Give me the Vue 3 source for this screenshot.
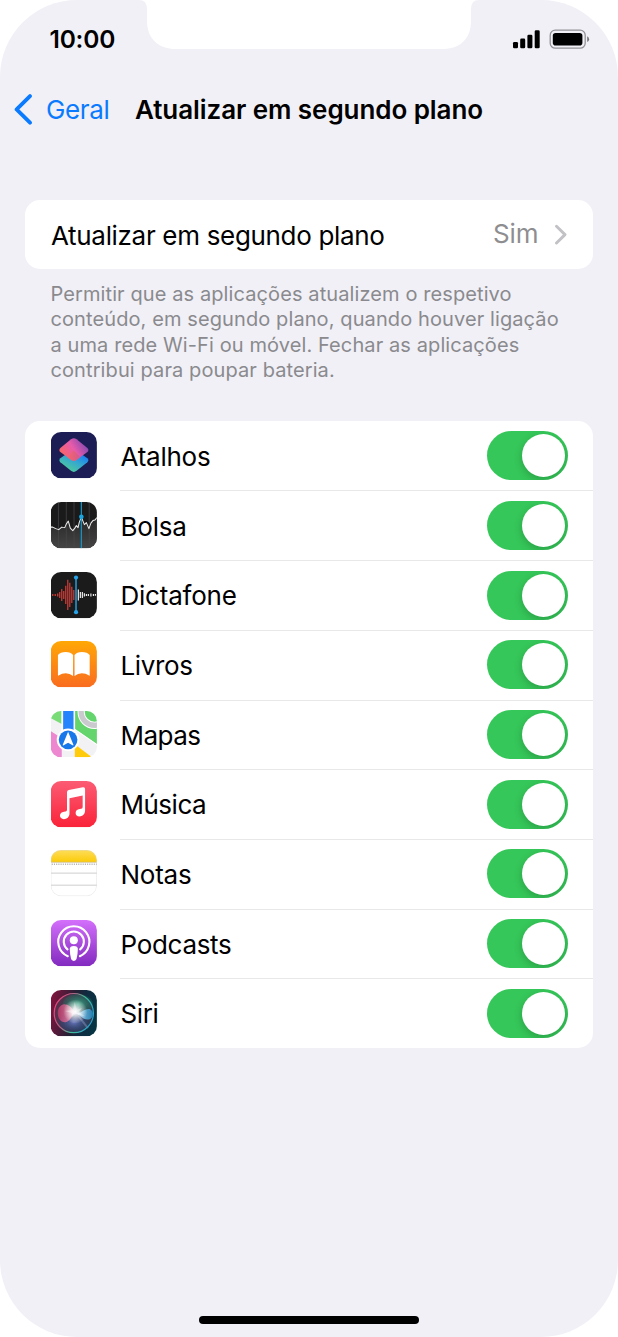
<script setup>
const apps = [
  { id: 'atalhos', name: 'Atalhos', ls: '-0.25px' },
  { id: 'bolsa', name: 'Bolsa', ls: '-0.2px' },
  { id: 'dictafone', name: 'Dictafone', ls: '-0.22px' },
  { id: 'livros', name: 'Livros', ls: '-0.35px' },
  { id: 'mapas', name: 'Mapas', ls: '-0.5px' },
  { id: 'musica', name: 'Música', ls: '-0.5px' },
  { id: 'notas', name: 'Notas', ls: '-0.25px' },
  { id: 'podcasts', name: 'Podcasts', ls: '-0.3px' },
  { id: 'siri', name: 'Siri', ls: '-0.35px' },
]
const redBars = [[2, 1], [4.5, 1], [7, 1.5], [9, 3], [11, 6], [13, 4], [15, 9], [17, 15], [19, 12], [21, 8], [23, 5]]
const whiteBars = [[27.5, 5.5], [29.5, 3], [31.5, 3], [33.5, 1.6], [35.5, 1], [37.5, 1], [40, 1.5], [42.5, 1], [44.5, 0.8]]
</script>

<template>
  <div class="phone">
    <svg class="notch" width="340" height="50" viewBox="0 0 340 50">
      <path d="M0 0 Q8 0 8 9 V21 C8 39 20 49 37 49 H303 C321 49 332 39 332 21 V9 Q332 0 340 0Z" fill="#fff" />
    </svg>

    <header class="status">
      <span class="time">10:00</span>
      <svg class="indicators" width="78" height="22" viewBox="0 0 78 22">
        <rect x="1" y="13" width="5" height="6.3" rx="1.3" />
        <rect x="8.2" y="9.6" width="5" height="9.7" rx="1.3" />
        <rect x="15.4" y="5.7" width="5" height="13.6" rx="1.3" />
        <rect x="22.7" y="1.3" width="5" height="18" rx="1.3" />
        <rect x="38.2" y="1.2" width="35" height="18" rx="5" fill="none" stroke="#929296" stroke-width="1.3" />
        <rect x="40.8" y="3.9" width="29.6" height="12.7" rx="2.8" />
        <path d="M75.2 7.3 Q77.1 8.2 77.1 10.2 T75.2 13.1Z" fill="#77777b" />
      </svg>
    </header>

    <nav class="nav">
      <svg class="back" width="20" height="32" viewBox="0 0 20 32">
        <path d="M17 3.1 L3.6 16.4 L17 29.7" fill="none" stroke="#0a7aff" stroke-width="3.8" stroke-linecap="round" stroke-linejoin="round" />
      </svg>
      <span class="geral">Geral</span>
      <h1 class="title">Atualizar em segundo plano</h1>
    </nav>

    <section class="card summary">
      <span class="summary-label">Atualizar em segundo plano</span>
      <span class="value">Sim</span>
      <svg width="14" height="22" viewBox="0 0 14 22">
        <path d="M2.5 3.3 L11 11.6 L2.5 20" fill="none" stroke="#c2c2c6" stroke-width="2.9" stroke-linecap="round" stroke-linejoin="round" />
      </svg>
    </section>

    <p class="note">
      <span>Permitir que as aplicações atualizem o respetivo</span>
      <span>conteúdo, em segundo plano, quando houver ligação</span>
      <span>a uma rede Wi-Fi ou móvel. Fechar as aplicações</span>
      <span>contribui para poupar bateria.</span>
    </p>

    <section class="card list">
      <div v-for="app in apps" :key="app.id" class="row">
        <svg class="icon" width="47" height="47" viewBox="0 0 47 47">
          <defs>
            <clipPath :id="'clip-' + app.id"><rect width="46" height="46" rx="10.3" /></clipPath>
          </defs>
          <g transform="translate(-0.3 0) scale(1.005)">
          <g :clip-path="`url(#clip-${app.id})`">
            <template v-if="app.id === 'atalhos'">
              <defs>
                <linearGradient id="at-top" x1="0.1" y1="0.7" x2="0.9" y2="0.3"><stop offset="0" stop-color="#f8646a" /><stop offset="0.5" stop-color="#e85baa" /><stop offset="1" stop-color="#8d4bb0" /></linearGradient>
                <linearGradient id="at-bot" x1="0.3" y1="0.9" x2="0.8" y2="0.2"><stop offset="0" stop-color="#4cc7a0" /><stop offset="0.5" stop-color="#35a8cf" /><stop offset="1" stop-color="#187df5" /></linearGradient>
                <linearGradient id="at-mid" x1="0" y1="0" x2="1" y2="0"><stop offset="0" stop-color="#f8646a" /><stop offset="1" stop-color="#cf5a90" /></linearGradient>
              </defs>
              <rect width="46" height="46" fill="#1b1d54" />
              <path d="M9.6 26 L20.5 18.3 Q23 16.7 25.5 18.3 L36.5 26 Q38.5 28 36.5 30 L25.8 38.6 Q23 40.8 20.2 38.6 L9.6 30 Q7.7 28 9.6 26Z" fill="url(#at-bot)" />
              <path d="M9.6 15.8 L20.2 7.2 Q23 5 25.8 7.2 L36.5 15.8 Q38.5 17.9 36.5 20 L25.5 27.8 Q23 29.3 20.5 27.8 L9.6 20 Q7.7 17.9 9.6 15.8Z" fill="url(#at-top)" />
              <path d="M16.5 25 L23 18.2 L29.5 25 L25.5 27.8 Q23 29.3 20.5 27.8Z" fill="url(#at-mid)" />
            </template>

            <template v-else-if="app.id === 'bolsa'">
              <defs><linearGradient id="bo-fill" x1="0" y1="0" x2="0" y2="1"><stop offset="0" stop-color="#444" stop-opacity="0.3" /><stop offset="1" stop-color="#444" /></linearGradient></defs>
              <rect width="46" height="46" fill="#1a1a1b" />
              <path d="M0 25 L3 25 L7 27.5 L11 25 L14 25.5 L17.5 19 L21 27.5 L23 28 L27 22 L30.5 15 L33 22 L35 20.5 L38 26 L41 19.5 L46 15.5 V46 H0Z" fill="url(#bo-fill)" />
              <path d="M7.7 0V46M15.5 0V46M23.2 0V46M38.3 0V46" stroke="#49494b" stroke-width="0.7" />
              <path d="M0 25 H2 L5 26.5 L8 27.5 L11 25 L14 25.5 L15.5 22 L17.5 19 L19.5 26 L22 28.5 L24 26 L25.5 23.5 L27.2 25.5 L28.5 20 L30.5 15 L32.5 20 L33.5 22.5 L35.5 20.5 L38 26.5 L40 21 L42 18.5 L44 18 L46 15.5" fill="none" stroke="#eee" stroke-width="1" stroke-linejoin="round" />
              <path d="M30.5 0V46" stroke="#1694cb" stroke-width="1.2" />
              <circle cx="30.5" cy="14.8" r="2.3" fill="#19a5df" />
            </template>

            <template v-else-if="app.id === 'dictafone'">
              <rect width="46" height="46" fill="#1b1b1c" />
              <path v-for="b in redBars" :key="b[0]" :d="`M${b[0]} ${22.8 - b[1]}V${22.8 + b[1]}`" stroke="#d9403a" stroke-width="1.15" />
              <path v-for="b in whiteBars" :key="b[0]" :d="`M${b[0]} ${22.8 - b[1]}V${22.8 + b[1]}`" stroke="#f1f1f1" stroke-width="1.15" />
              <path d="M25.2 5.5V40" stroke="#2495cf" stroke-width="1.6" />
              <circle cx="25.2" cy="5.5" r="2.1" fill="#27a4e8" /><circle cx="25.2" cy="40" r="2.1" fill="#27a4e8" />
            </template>

            <template v-else-if="app.id === 'livros'">
              <defs><linearGradient id="li-bg" x1="0" y1="0" x2="0" y2="1"><stop offset="0" stop-color="#ffa806" /><stop offset="1" stop-color="#f96c1f" /></linearGradient></defs>
              <rect width="46" height="46" fill="url(#li-bg)" />
              <path d="M7.2 14 Q9.5 10.9 15 10.9 Q20 10.9 22.3 14 V34.8 Q19 32 15 32 Q11 32 8.3 34.2 Q7.2 35 7.2 34Z M38.8 14 Q36.5 10.9 31 10.9 Q26 10.9 23.7 14 V34.8 Q27 32 31 32 Q35 32 37.7 34.2 Q38.8 35 38.8 34Z" fill="#fff" />
            </template>

            <template v-else-if="app.id === 'mapas'">
              <rect width="46" height="46" fill="#f2f2f4" />
              <path d="M0 0H11V13L0 7Z" fill="#79dc77" />
              <path d="M0 20 L11 27 V46 H0Z" fill="#ed87cf" />
              <path d="M24 0H46V33L24 18Z" fill="#63d56c" />
              <path d="M24 33 L41 46 H24Z" fill="#ffcb0a" />
              <circle cx="43.5" cy="1" r="13.2" fill="none" stroke="#fff" stroke-width="7.2" /><circle cx="43.5" cy="1" r="13.2" fill="none" stroke="#cacace" stroke-width="5.3" />
              <path d="M11.5 0V24M23.5 0V24" stroke="#fff" stroke-width="1.6" />
              <rect x="12.4" width="10.3" height="24" fill="#2583fb" />
              <path d="M24 18.2 L46 33.5" stroke="#fff" stroke-width="1" />
              <circle cx="17.3" cy="28.7" r="11.3" fill="#fff" />
              <circle cx="17.3" cy="28.7" r="9.3" fill="#1978e9" />
              <path d="M17.3 20.7 L22.6 33.5 Q22.8 34.5 21.7 34.1 L17.3 31.5 L12.9 34.1 Q11.8 34.5 12 33.5Z" fill="#fff" />
            </template>

            <template v-else-if="app.id === 'musica'">
              <defs><linearGradient id="mu-bg" x1="0" y1="0" x2="0" y2="1"><stop offset="0" stop-color="#fb5c74" /><stop offset="1" stop-color="#fa2339" /></linearGradient></defs>
              <rect width="46" height="46" fill="url(#mu-bg)" />
              <path d="M16.2 11.2 Q16.2 9.4 18 9 L32 6.3 Q34.2 5.9 34.2 8 V29.2 C34.2 33.3 31.6 35.2 28.6 35.2 C26.3 35.2 24.8 33.8 24.8 31.8 C24.8 29.5 26.2 28.3 28.8 27.8 L30.4 27.5 Q31.8 27.2 31.8 25.8 V14.4 L18.7 17.1 V32.2 C18.7 36.2 16 38 13.1 38 C10.8 38 9.2 36.6 9.2 34.7 C9.2 32.4 10.7 31.2 13.2 30.7 L14.8 30.4 Q16.2 30.1 16.2 28.5Z" fill="#fff" />
            </template>

            <template v-else-if="app.id === 'notas'">
              <defs><linearGradient id="no-bg" x1="0" y1="0" x2="0" y2="1"><stop offset="0" stop-color="#fddd5b" /><stop offset="1" stop-color="#fccb09" /></linearGradient></defs>
              <rect width="46" height="46" fill="#fff" />
              <rect width="46" height="12" fill="url(#no-bg)" />
              <path d="M0 12.2H46" stroke="#c9b985" stroke-width="0.8" />
              <path d="M1 14.2H46" stroke="#b4b4b4" stroke-width="1.3" stroke-dasharray="1.1 1.1" />
              <path d="M0 23H46M0 35H46" stroke="#c9c9cb" stroke-width="0.9" />
              <rect x="0.3" y="0.3" width="45.4" height="45.4" rx="10" fill="none" stroke="#d8d8d8" stroke-opacity="0.65" stroke-width="0.7" />
            </template>

            <template v-else-if="app.id === 'podcasts'">
              <defs><linearGradient id="po-bg" x1="0" y1="0" x2="0" y2="1"><stop offset="0" stop-color="#d36ffb" /><stop offset="1" stop-color="#822abf" /></linearGradient></defs>
              <rect width="46" height="46" fill="url(#po-bg)" />
              <g fill="none" stroke="#fff" stroke-width="2.1" stroke-linecap="round">
                <path d="M17 36 A15.5 15.5 0 1 1 29 36" />
                <path d="M16.7 29.2 A10 10 0 1 1 29.3 29.2" />
              </g>
              <circle cx="23" cy="20.2" r="4" fill="#fff" />
              <path d="M19 28.7 Q19 25.8 23 25.8 T27 28.7 Q27 34 25.7 38.9 Q25.2 40.7 23 40.7 T20.3 38.9 Q19 34 19 28.7Z" fill="#fff" />
            </template>

            <template v-else>
              <defs>
                <linearGradient id="si-bg" x1="0" y1="0.4" x2="1" y2="0.6"><stop offset="0" stop-color="#7c143d" /><stop offset="0.48" stop-color="#242135" /><stop offset="0.7" stop-color="#102c40" /><stop offset="1" stop-color="#063443" /></linearGradient>
                <linearGradient id="si-ring" x1="0" y1="0.3" x2="1" y2="0.7"><stop offset="0" stop-color="#e84278" /><stop offset="0.35" stop-color="#ab6887" /><stop offset="0.6" stop-color="#43bd98" /><stop offset="1" stop-color="#299bd0" /></linearGradient>
                <linearGradient id="si-pink" x1="0" y1="0" x2="1" y2="0"><stop offset="0" stop-color="#c93a6e" stop-opacity="0.75" /><stop offset="1" stop-color="#f6a7bf" stop-opacity="0.9" /></linearGradient>
                <linearGradient id="si-cyan" x1="0" y1="0" x2="1" y2="0"><stop offset="0" stop-color="#b5dcf2" /><stop offset="1" stop-color="#268fc9" stop-opacity="0.8" /></linearGradient>
                <radialGradient id="si-green"><stop offset="0" stop-color="#42cc9a" stop-opacity="0.75" /><stop offset="1" stop-color="#158163" stop-opacity="0.25" /></radialGradient>
                <radialGradient id="si-blue"><stop offset="0" stop-color="#7382cf" stop-opacity="0.85" /><stop offset="1" stop-color="#174687" stop-opacity="0.2" /></radialGradient>
                <radialGradient id="si-light"><stop offset="0" stop-color="#fff" /><stop offset="0.3" stop-color="#fff" stop-opacity="0.8" /><stop offset="1" stop-color="#fff" stop-opacity="0" /></radialGradient>
              </defs>
              <rect width="46" height="46" fill="url(#si-bg)" />
              <circle cx="23" cy="23" r="19" fill="#4b4358" fill-opacity="0.6" />
              <ellipse cx="27" cy="14" rx="15" ry="10" fill="url(#si-green)" />
              <ellipse cx="23" cy="32" rx="15" ry="10" fill="url(#si-blue)" />
              <path d="M25 23 C19 14 12 11 8 18 C5 25 9 33 15 32 C20 31 21 24 25 23Z" fill="url(#si-pink)" />
              <path d="M24 23 C31 24 33 18 39 19 C43 21 43 27 39 29 C33 31 30 25 24 23Z" fill="url(#si-cyan)" />
              <path d="M27 25 L37 38" stroke="#bac6e8" stroke-opacity="0.3" stroke-width="2" />
              <circle cx="23" cy="23" r="19.5" fill="none" stroke="url(#si-ring)" stroke-width="1.2" />
              <circle cx="24.5" cy="21.5" r="12" fill="url(#si-light)" />
              <path d="M14 21 L22 20 L24 12 L26 20 L31 18 L28 22 L34 26 L25 24 L21 27 L21 23Z" fill="#fff" fill-opacity="0.35" />
            </template>
          </g>
          </g>
        </svg>
        <div class="content">
          <span class="name" :style="{ letterSpacing: app.ls }">{{ app.name }}</span>
          <span class="toggle"><span class="knob"></span></span>
        </div>
      </div>
    </section>

    <div class="home"></div>
  </div>
</template>

<style>
html, body { margin: 0; background: #fff; }
</style>

<style scoped>
.phone {
  position: relative;
  box-sizing: border-box;
  width: 618px;
  height: 1337px;
  padding: 0 25.5px;
  display: flex;
  flex-direction: column;
  background: #f1f0f6;
  border-radius: 77px;
  overflow: hidden;
  font-family: Inter, "Liberation Sans", sans-serif;
  color: #000;
}
.notch { position: absolute; left: 139px; top: 0; }
.status {
  display: flex;
  justify-content: space-between;
  align-items: flex-start;
  height: 79px;
  flex: none;
}
.time { margin: 24px 0 0 24px; font-size: 24.5px; line-height: 30px; font-weight: 600; letter-spacing: -0.2px; }
.indicators { margin: 29px 2.5px 0 0; }
.nav {
  display: flex;
  align-items: center;
  height: 60px;
  margin-left: -12.5px;
  white-space: nowrap;
  flex: none;
}
.back { flex: none; }
.geral { width: 89px; margin-left: 13px; font-size: 26px; color: #0a7aff; letter-spacing: -0.35px; }
.title { margin: 0; font-size: 26px; font-weight: 600; letter-spacing: -0.07px; }
.card { background: #fff; border-radius: 15px; flex: none; }
.summary {
  box-sizing: border-box;
  height: 69.5px;
  margin: 60.7px 0 0 -0.3px;
  padding: 0 25px 0 25.8px;
  display: flex;
  align-items: center;
  white-space: nowrap;
}
.summary-label { flex: 1; padding-top: 2px; font-size: 26px; letter-spacing: -0.32px; }
.value { margin: -2px 15px 0 0; font-size: 26px; color: #8e8e91; letter-spacing: -0.1px; }
.note {
  margin: 12.8px 0 0 25px;
  height: 138.8px;
  font-size: 20px;
  line-height: 25.4px;
  letter-spacing: 0.1px;
  color: #8a8a8e;
  white-space: nowrap;
  flex: none;
}
.note span { display: block; }
.list { overflow: hidden; margin-left: -0.3px; }
.row { display: flex; height: 69.7px; padding-left: 25.3px; }
.icon { flex: none; margin-top: 11.4px; }
.content {
  flex: 1;
  display: flex;
  align-items: center;
  justify-content: space-between;
  margin-left: 22px;
  padding-right: 25px;
  box-shadow: 0 0.7px 0 #dedee0;
}
.row:last-child .content { box-shadow: none; }
.name { font-size: 26px; padding: 1.4px 0 0 1px; }
.toggle {
  display: flex;
  justify-content: flex-end;
  align-items: center;
  box-sizing: border-box;
  width: 81px;
  height: 49px;
  padding-right: 3px;
  border-radius: 25px;
  background: #35c759;
  overflow: hidden;
}
.knob { width: 43px; height: 43px; border-radius: 50%; background: #fff; box-shadow: 0 3px 9px rgba(0, 0, 0, 0.2); }
.home { align-self: center; width: 220px; height: 8px; margin-top: auto; margin-bottom: 12.6px; border-radius: 4px; background: #000; flex: none; }
</style>
